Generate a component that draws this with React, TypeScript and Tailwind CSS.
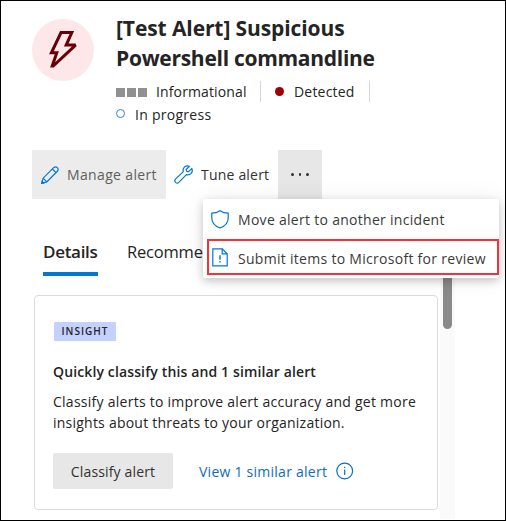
import React from "react";

function Bolt() {
  return (
    <svg width="32" height="40" viewBox="0 0 32 40" fill="none" stroke="#660006" strokeWidth="3">
      <path d="M14 2.5H24.8L19.2 15.1H28.6L6.2 36H5.2L9.8 22.8H4.4Z" strokeLinejoin="miter" strokeMiterlimit="2.6" />
    </svg>
  );
}

function Pencil() {
  return (
    <svg width="18" height="18" viewBox="0 0 18 18" fill="none" stroke="#0078d4" strokeWidth="1.2" className="shrink-0">
      <path d="M.7 17.3L2.1 12.2L12.9 1.4C15.3-.4 18.3 2.5 16.6 5L5.8 15.9Z" />
      <path d="M11.3 3L15 6.7M2.1 12.2L5.8 15.9M.7 17.3L2.7 16.8L1.2 15.3Z" />
    </svg>
  );
}

function Wrench() {
  return (
    <svg width="19" height="19" viewBox="0 0 19 19" fill="none" stroke="#0078d4" strokeWidth="1.2" className="shrink-0">
      <path d="M15.4 1.2C11.6-.3 8.3 2.8 9.3 6.6L1.5 14.1C-.6 16.4 2.6 19.5 4.8 17.4L12.4 9.7C16.2 10.7 19.4 7.3 17.8 3.6L14.3 6.9L12.7 6.3L12.2 4.5Z" />
    </svg>
  );
}

function Shield() {
  return (
    <svg width="18" height="19" viewBox="0 0 18 19" fill="none" stroke="#0078d4" strokeWidth="1.2" className="shrink-0">
      <path d="M9 .7C6.6 2.4 3.8 3.1.8 3.1V8C.8 12.8 4.2 16.2 9 18C13.8 16.2 17.2 12.8 17.2 8V3.1C14.2 3.1 11.4 2.4 9 .7Z" />
    </svg>
  );
}

function FileAlert() {
  return (
    <svg width="16" height="19" viewBox="0 0 16 19" fill="none" stroke="#0078d4" strokeWidth="1.2" className="shrink-0">
      <path d="M.8.8H10.2L15.2 5.8V17.8H.8Z" />
      <path d="M10.2.8V5.8H15.2" />
      <path d="M8 7.3V11.8M8 13V14.6" strokeWidth="1.4" />
    </svg>
  );
}

function Info() {
  return (
    <svg width="18" height="18" viewBox="0 0 18 18" fill="none" stroke="#0f6cbd" strokeWidth="1.2" className="shrink-0">
      <circle cx="8.7" cy="9" r="7.9" />
      <path d="M8.7 7.4V13M8.7 4.7V6" />
    </svg>
  );
}

export default function App() {
  return (
    <div className="relative flex h-[521px] w-[506px] flex-col overflow-hidden border border-black bg-white font-['Open_Sans','Noto_Sans',sans-serif] text-[14px] whitespace-nowrap text-[#242424]">
      <header className="flex h-[149px] pt-3 pl-[31px]">
        <div className="mt-1.5 flex h-[62px] w-[62px] shrink-0 items-center justify-center rounded-full bg-[#fde7e9]">
          <Bolt />
        </div>
        <div className="ml-[22px]">
          <h1 className="text-[21px] leading-[30px] font-bold">
            <span className="block tracking-[-0.1px]">[Test Alert] Suspicious</span>
            <span className="block tracking-[-0.28px]">Powershell commandline</span>
          </h1>
          <div className="mt-2 flex h-[21px] items-center">
            <div className="mt-0.5 flex gap-0.5">
              <i className="size-[9px] bg-[#919191]" />
              <i className="size-[9px] bg-[#919191]" />
              <i className="size-[9px] bg-[#919191]" />
            </div>
            <span className="ml-[9px] w-[91px] tracking-[0.13px]">Informational</span>
            <i className="ml-[13px] h-[21px] w-px bg-[#d6d6d6]" />
            <i className="ml-[14px] size-[9px] rounded-full bg-[#a00000]" />
            <span className="ml-[10px] w-[61px] tracking-[0.2px]">Detected</span>
            <i className="ml-[14px] h-[21px] w-px bg-[#d6d6d6]" />
          </div>
          <div className="flex h-[22px] items-center">
            <i className="size-[9px] rounded-full border border-[#2b88d8]" />
            <span className="mt-0.5 ml-[10px] tracking-[0.27px]">In progress</span>
          </div>
        </div>
      </header>

      <div className="ml-[31px] flex h-[49px]">
        <button className="flex w-[134px] items-center gap-2 bg-[#ececec] pl-[9px] tracking-[0.35px] text-[#605e5c]">
          <Pencil />
          <span>Manage alert</span>
        </button>
        <button className="flex w-[112px] items-center gap-2 pl-2 tracking-[0.2px] text-[#323130]">
          <Wrench />
          <span>Tune alert</span>
        </button>
        <button className="flex w-11 items-center justify-center gap-[5px] bg-[#e7e7e7]">
          <i className="size-[2.5px] rounded-full bg-[#323130]" />
          <i className="size-[2.5px] rounded-full bg-[#323130]" />
          <i className="size-[2.5px] rounded-full bg-[#323130]" />
        </button>
      </div>

      <nav className="mt-[38px] ml-[42px] flex h-[39px] text-[17px] leading-[30px]">
        <span className="w-[55px] border-b-4 border-[#0078d4] font-semibold tracking-[-0.3px]">Details</span>
        <span className="ml-[29px] text-[16.5px] tracking-[-0.2px]">Recomme</span>
      </nav>

      <div className="flex h-[243px]">
        <section className="mt-[19px] ml-[33px] flex h-[215px] w-[404px] shrink-0 flex-col rounded-[4px] border border-[#dcdcdc] pl-[18px]">
          <span className="mt-[26px] ml-px flex h-[19px] w-[62px] items-center justify-center rounded-[1px] bg-[#c5d1fd] text-[10px] font-semibold tracking-[1px]">
            INSIGHT
          </span>
          <h2 className="mt-[21px] h-[20px] leading-[20px] font-semibold tracking-[0.13px]">
            Quickly classify this and 1 similar alert
          </h2>
          <p className="mt-[9px] leading-[21px] tracking-[0.26px]">
            Classify alerts to improve alert accuracy and get more
            <br />
            <span className="tracking-[0.23px]">insights about threats to your organization.</span>
          </p>
          <div className="mt-[20px] flex h-9 items-center">
            <button className="h-9 w-[120px] rounded-[2px] bg-[#e7e7e7] tracking-[0.15px] text-[#323130]">
              Classify alert
            </button>
            <a className="ml-[26px] w-[129px] tracking-[0.25px] text-[#0f6cbd]">View 1 similar alert</a>
            <span className="ml-[8px] flex">
              <Info />
            </span>
          </div>
        </section>
        <div className="ml-[2px] w-[15px] bg-[#fafafa] pl-[3px]">
          <div className="h-[53px] w-[9px] rounded-b-full bg-[#8a8a8a]" />
        </div>
      </div>

      <div className="absolute top-[198px] left-[202px] h-[79px] w-[296px] rounded-[2px] bg-white text-[#3b3a39] shadow-[0_3px_8px_rgba(0,0,0,0.2),0_0_24px_rgba(0,0,0,0.07)]">
        <div className="flex h-10 items-center pl-2 tracking-[0.29px]">
          <Shield />
          <span className="ml-[9px]">Move alert to another incident</span>
        </div>
        <div className="ml-1 flex h-[36px] w-[292px] items-center border-2 border-[#f13438] pl-[3px] tracking-[0.29px]">
          <FileAlert />
          <span className="mt-0.5 ml-[10px]">Submit items to Microsoft for review</span>
        </div>
      </div>
    </div>
  );
}
